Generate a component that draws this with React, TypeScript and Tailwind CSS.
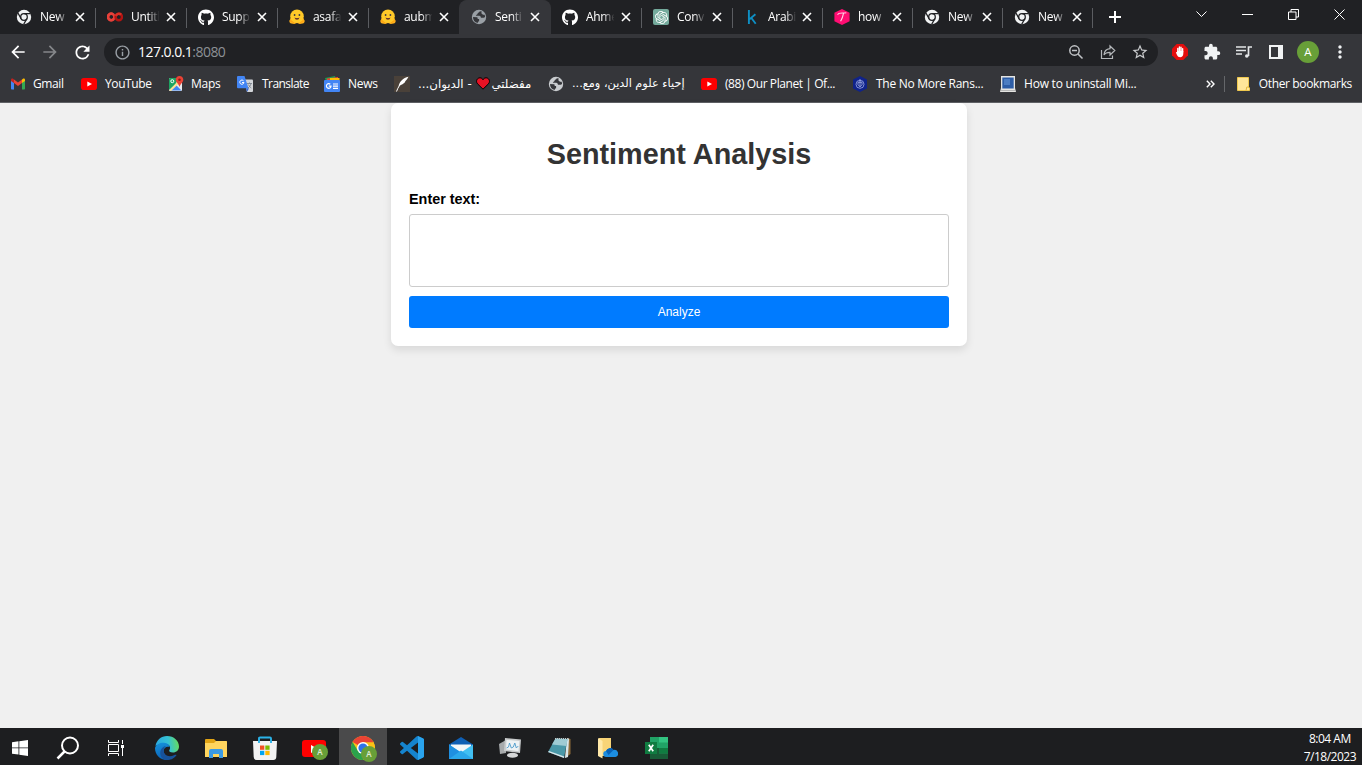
import React from "react";
import { FaGithub } from "react-icons/fa";
import { SiOpenai } from "react-icons/si";
import { MdArrowBack, MdArrowForward, MdRefresh, MdInfoOutline, MdStarBorder, MdExtension, MdMoreVert } from "react-icons/md";

const ui = "font-['Open_Sans','Noto_Sans',sans-serif]";

function Colab() {
  return (
    <svg width="16" height="16" viewBox="0 0 16 16" fill="none" strokeWidth="2.5">
      <circle cx="4.2" cy="8" r="3.2" stroke="#e8413a" />
      <circle cx="11.8" cy="8" r="3.2" stroke="#b31412" />
      <path d="M6 5.2A3.2 3.2 0 1 0 6.5 10.2" stroke="#e8413a" />
      <path d="M8.8 7a3.2 3.2 0 0 1 5.3-1.3" stroke="#d93025" />
    </svg>
  );
}

function ChromeMono() {
  return (
    <svg width="16" height="16" viewBox="0 0 16 16" fill="none">
      <circle cx="8" cy="8" r="7.200" fill="#f1f3f4" />
      <circle cx="8" cy="8" r="3.300" stroke="#202124" strokeWidth="1.300" />
      <path d="M8 4.700h6.500M5.100 9.600L1.900 4M10.900 9.600L7.700 15.200" stroke="#202124" strokeWidth="1.300" />
    </svg>
  );
}

function Globe({ disc, land }: { disc: string; land: string }) {
  return (
    <svg width="16" height="16" viewBox="0 0 16 16">
      <circle cx="8" cy="8" r="7.200" fill={disc} />
      <path d="M8.800 2.200c-.2 1.500-2 1.200-2.300 2.500-.2 1.200-1.800.8-1.600 2.100h3.300c1.300 0 1.700 1 1.700 2h2.300c.8 0 1.100-.6 1.900-.6a6 6 0 0 0-.5-2.500h-1.400c-1 0-1-1.400-2-1.400V3.600c.7 0 .8-.6.5-1.100zM2 8l4 .3c.8.200.8 1 .6 1.700h1.500v2.200c-1.300.2-1.300 1-1.300 1.700A6 6 0 0 1 2 8z" fill={land} />
    </svg>
  );
}

function Hugging() {
  return (
    <svg width="16" height="16" viewBox="0 0 16 16">
      <path d="M2 8.500L.4 11.800c-.3 1.500.6 2.500 2 2.700l2.800.4 2.800-1 2.800 1 2.800-.4c1.400-.2 2.300-1.200 2-2.700L14 8.500z" fill="#ffb21e" />
      <circle cx="8" cy="7.300" r="6.800" fill="#ffc928" />
      <circle cx="5.600" cy="6" r=".9" fill="#3a3b45" />
      <circle cx="10.400" cy="6" r=".9" fill="#3a3b45" />
      <path d="M5.500 8.400q2.500 1.100 5 0-.4 2.400-2.500 2.400T5.500 8.400z" fill="#6b3a2b" />
      <path d="M.8 11.600l2.600 1 1.800 1.800M15.200 11.600l-2.600 1-1.800 1.800" stroke="#ff9d0b" strokeWidth=".8" fill="none" />
    </svg>
  );
}

function OpenAi() {
  return (
    <span className="flex size-4 items-center justify-center rounded-xs bg-[#74aa9c]">
      <SiOpenai size={13} color="#fff" />
    </span>
  );
}

function Kaggle() {
  return (
    <svg width="16" height="16" viewBox="0 0 16 16" fill="none" stroke="#0e8fc4" strokeWidth="1.900">
      <path d="M4.900 1v14M11.400 5.200L5.400 10.400M7.400 9l4.300 5.700" />
    </svg>
  );
}

function PinkHex() {
  return (
    <svg width="16" height="16" viewBox="0 0 16 16">
      <path d="M8 0l7.600 3.800v8.400L8 16 .4 12.200V3.800z" fill="#ff0d72" />
      <path d="M3.600 5.700c1-2.500 4.400-1.300 8.700-1.900M9.500 4.300C9 7 8.200 9.500 6.600 12.300" stroke="#ffd5e7" strokeWidth="1.100" fill="none" />
    </svg>
  );
}

const chrome = <ChromeMono />;
const github = <FaGithub size={17} color="#fff" />;

const tabs = [
  { t: "New", i: chrome },
  { t: "Untitl", i: <Colab /> },
  { t: "Supp", i: github },
  { t: "asafa", i: <Hugging /> },
  { t: "aubm", i: <Hugging /> },
  { t: "Senti", i: <Globe disc="#9aa0a6" land="#35363a" />, active: true },
  { t: "Ahme", i: github },
  { t: "Conv", i: <OpenAi /> },
  { t: "Arabi", i: <Kaggle />, narrow: true },
  { t: "how", i: <PinkHex />, narrow: true },
  { t: "New", i: chrome, narrow: true },
  { t: "New", i: chrome, narrow: true },
];

function TabStrip() {
  return (
    <div className="flex h-[34px] bg-[#202124] pl-[5px] text-white">
      {tabs.map((tab, n) => (
        <div
          key={n}
          className={`relative flex h-full shrink-0 items-center pl-[11px] ${tab.narrow ? "w-[90px]" : "w-[91px]"} ${tab.active ? "rounded-t-lg bg-[#35363a] shadow-[-1px_0_0_#35363a]" : ""}`}
        >
          <span className="flex w-4 shrink-0 items-center justify-center">{tab.i}</span>
          <span className="ml-2 w-[31px] shrink-0 text-[12px] leading-4 tracking-[-0.3px] whitespace-nowrap [mask-image:linear-gradient(to_right,#000_55%,transparent_92%)]">
            {tab.t}
          </span>
          <svg className="mr-[11px] ml-auto shrink-0" width="10" height="10" viewBox="0 0 10 10" stroke="#fff" strokeWidth="1.600">
            <path d="M1 1l8 8M9 1l-8 8" />
          </svg>
          {!tab.active && n !== 4 && <span className="absolute top-2 right-0 h-5 w-px bg-[#5b5d61]" />}
        </div>
      ))}
      <svg className="mt-[9px] ml-[14px]" width="16" height="16" viewBox="0 0 16 16" stroke="#fff" strokeWidth="2">
        <path d="M8 2v12M2 8h12" />
      </svg>
      <div className="ml-auto flex h-7">
        {["M.5 2.500l5 5 5-5", "M0 5.500h11", "M.5 3h7.500v7.500h-7.500zM3 3V.5h7.500V8H8", "M.5.5l10 10M10.500.5l-10 10"].map((d) => (
          <span key={d} className="flex w-[46px] items-center justify-center">
            <svg width="11" height="11" viewBox="0 0 11 11" fill="none" stroke="#fff">
              <path d={d} />
            </svg>
          </span>
        ))}
      </div>
    </div>
  );
}

function Cell({ children }: { children: React.ReactNode }) {
  return <span className="flex w-8 shrink-0 items-center justify-center">{children}</span>;
}

function Toolbar() {
  return (
    <div className="flex h-9 items-center bg-[#35363a] pl-[2px]">
      <Cell><MdArrowBack size={20} color="#fff" /></Cell>
      <Cell><MdArrowForward size={20} color="#85878a" /></Cell>
      <Cell><MdRefresh size={21} color="#fff" /></Cell>
      <div className="ml-[6px] flex h-7 w-[1054px] items-center rounded-full bg-[#202124] pr-[2px] pl-[10px]">
        <MdInfoOutline size={17} color="#9aa0a6" />
        <span className="ml-[7px] text-[14px] leading-5 tracking-[-0.53px] text-white">
          127.0.0.1<span className="text-[#8d9196]">:8080</span>
        </span>
        <div className="ml-auto flex">
          <Cell>
            <svg width="16" height="16" viewBox="0 0 16 16" fill="none" stroke="#c0c3c6" strokeWidth="1.500">
              <circle cx="6.500" cy="6.500" r="4.700" />
              <path d="M10 10l4.500 4.500M4 6.500h5" />
            </svg>
          </Cell>
          <Cell>
            <svg width="16" height="16" viewBox="0 0 16 16" fill="none" stroke="#b4b7ba" strokeWidth="1.200">
              <path d="M1.500 6v8.500h11v-3M10 2l4.800 4.500L10 11V8.300c-3 0-4.800.7-6 2.700 .2-3.800 2.300-6 6-6.400z" />
            </svg>
          </Cell>
          <Cell><MdStarBorder size={18} color="#c8cacc" /></Cell>
        </div>
      </div>
      <div className="ml-[6px] flex items-center">
        <Cell>
          <svg width="16" height="16" viewBox="0 0 16 16">
            <path d="M4.700 0h6.600L16 4.700v6.600L11.300 16H4.700L0 11.300V4.700z" fill="#e40d0d" />
            <path d="M5.800 8V4.500M7.400 7V3M9 7V3.200M10.600 8V4.600" stroke="#fff" strokeWidth="1.400" strokeLinecap="round" />
            <path d="M5.100 7h6.200v2.800c0 2-1.300 3.400-3.100 3.400-1.600 0-2.500-.7-3.200-2.200L3.900 8.600c.2-.7.900-.7 1.200-.2z" fill="#fff" />
          </svg>
        </Cell>
        <Cell><MdExtension size={18} color="#f1f3f4" /></Cell>
        <Cell>
          <svg width="16" height="16" viewBox="0 0 16 16" fill="none" stroke="#e4e6e8" strokeWidth="1.700">
            <path d="M0 3h10M0 6.500h10M0 10h6M12.500 12V3H16" />
            <circle cx="10.800" cy="12" r="1.800" fill="#e4e6e8" stroke="none" />
          </svg>
        </Cell>
        <Cell>
          <svg width="14" height="14" viewBox="0 0 14 14">
            <path d="M1 1h12v12H1z" fill="none" stroke="#f1f3f4" strokeWidth="2" />
            <path d="M9 1h4v12H9z" fill="#f1f3f4" />
          </svg>
        </Cell>
        <Cell><span className="flex size-[22px] items-center justify-center rounded-full bg-[#689f38] text-[11.500px] leading-none font-medium text-white">A</span></Cell>
        <Cell><MdMoreVert size={20} color="#f1f3f4" /></Cell>
      </div>
    </div>
  );
}

function YouTube() {
  return (
    <svg width="16" height="12" viewBox="0 0 16 12">
      <rect width="16" height="12" rx="2.800" fill="#f00" />
      <path d="M6.300 3.500L11 6 6.300 8.500z" fill="#fff" />
    </svg>
  );
}

function Gmail() {
  return (
    <svg width="14" height="12" viewBox="0 0 14 11">
      <path d="M0 1.500v8.700c0 .5.300.8.800.8H3V4z" fill="#4285f4" />
      <path d="M14 1.500v8.700c0 .5-.3.800-.8.800H11V4z" fill="#34a853" />
      <path d="M3 4.600V1l4 3 4-3v3.600l-4 3z" fill="#ea4335" />
      <path d="M0 1.500C0 .2 1.300-.3 2.300.4L3 1v3.600L0 2.500z" fill="#c5221f" />
      <path d="M14 1.500c0-1.300-1.300-1.800-2.300-1.100L11 1v3.600l3-2.100z" fill="#fbbc04" />
    </svg>
  );
}

function Maps() {
  return (
    <svg width="16" height="16" viewBox="0 0 16 16">
      <rect x="1" y="2" width="13" height="13" rx="1" fill="#e8eaed" />
      <path d="M1 3q0-1 1-1h8L8 8l-7 6z" fill="#1ea362" />
      <path d="M1.500 14.500L7.500 8.500l6 6z" fill="#4285f4" />
      <path d="M1 14.500L9 6l2 1.500-8 7.500z" fill="#fde293" />
      <circle cx="4.300" cy="5.200" r="1.500" fill="none" stroke="#fff" />
      <path d="M11.500 0c2.300 0 3.800 1.700 3.800 3.700 0 2.500-2.700 3.600-3.800 7.300-1-3.700-3.700-4.800-3.700-7.300C7.800 1.700 9.300 0 11.500 0z" fill="#ea4335" />
      <circle cx="11.500" cy="3.700" r="1.300" fill="#8e1b14" />
    </svg>
  );
}

function Translate() {
  return (
    <svg width="16" height="16" viewBox="0 0 16 16">
      <path d="M7 3.500h8q1 0 1 1V15q0 1-1 1h-5z" fill="#d3d6da" />
      <path d="M9 12.300h3L10 16z" fill="#3367d6" />
      <path d="M1 0h6.500l4 12.300H1q-1 0-1-1V1q0-1 1-1z" fill="#4285f4" />
      <path d="M6.600 4.900A2.100 2.100 0 1 0 7 6.500H5" stroke="#fff" fill="none" />
      <path d="M10 7.500h5M12.500 6.500v1M14 7.500c-.5 2-1.500 3.300-3 4.500M11.300 8.500c.7 1.500 1.700 2.500 3 3.500" stroke="#727b86" fill="none" strokeWidth=".8" />
    </svg>
  );
}

function News() {
  return (
    <svg width="16" height="16" viewBox="0 0 16 16">
      <path d="M1 2l10-2 1.500 5H2z" fill="#1e9e50" />
      <path d="M3 2.500L14 1v4H3z" fill="#ea4335" />
      <path d="M6 2h9.500v4H6z" fill="#fbbc04" />
      <rect y="4" width="16" height="12" rx="1" fill="#4285f4" />
      <path d="M6.300 8.300A2.300 2.300 0 1 0 7 10.200H4.800M9 8h5M9 10.200h5M9 12.400h5" stroke="#fff" fill="none" strokeWidth="1.200" />
    </svg>
  );
}

function Feather() {
  return (
    <svg width="16" height="16" viewBox="0 0 16 16">
      <path d="M0 0h16v16H0z" fill="#4a4139" />
      <path d="M14.500.8C9 2 5.500 5.500 4.500 10.500 9 8 11 7 11.300 5.300 12.500 4 13.700 2.500 14.500.8z" fill="#fff" />
      <path d="M2.500 15.500C4 11 7 7 10 4.500" stroke="#fff" fill="none" />
    </svg>
  );
}

function Heart() {
  return (
    <svg className="mx-[1px] inline-block align-[-2px]" width="14" height="13" viewBox="0 0 14 13">
      <path d="M7 12.200L1.500 6.800C-.8 4 1.400.7 4 .8 5.600.9 6.500 1.700 7 2.700 7.500 1.700 8.400.9 10 .8c2.600-.1 4.800 3.200 2.500 6z" fill="#e81224" stroke="#000" />
    </svg>
  );
}

function Shield() {
  return (
    <svg width="16" height="16" viewBox="0 0 16 16">
      <path d="M8 0l7 3.500v9L8 16l-7-3.500v-9z" fill="#10238a" />
      <circle cx="8" cy="8.300" r="4" fill="none" stroke="#8d9bdc" strokeWidth=".9" />
      <path d="M6 6.300h4v2.500l-2 2-2-2zM8 3v8" fill="none" stroke="#aab4e6" strokeWidth=".8" />
    </svg>
  );
}

function Laptop() {
  return (
    <svg width="16" height="16" viewBox="0 0 16 16">
      <path d="M1 0h14v12l1 4H0l1-4z" fill="#e4e4e1" />
      <path d="M2.300 1.500h11.400V12.500H2.300z" fill="#2d5da6" />
      <path d="M4 3h6v6H4z" fill="#4c7dc2" />
      <path d="M1 14.500h14" stroke="#b7b8b8" />
    </svg>
  );
}

const marks = [
  { t: "Gmail", i: <Gmail />, w: "w-[71px]", s: "tracking-[-0.4px] -ml-px" },
  { t: "YouTube", i: <YouTube />, w: "w-[87px]", s: "tracking-[-0.4px]" },
  { t: "Maps", i: <Maps />, w: "w-[69px]", s: "tracking-[-0.25px] -ml-px" },
  { t: "Translate", i: <Translate />, w: "w-[87px]", s: "tracking-[-0.55px] [word-spacing:0] pl-px tracking-[-0.4px]" },
  { t: "News", i: <News />, w: "w-[70px]", s: "tracking-[-0.25px]" },
  { t: <>مفضلتي<Heart /> - الديوان...</>, i: <Feather />, w: "w-[154px]", s: "text-[11.800px]", rtl: true },
  { t: "إحياء علوم الدين، ومع...", i: <Globe disc="#c8cbce" land="#35363a" />, w: "w-[153px]", s: "text-[11.300px]", rtl: true },
  { t: "(88) Our Planet | Of...", i: <YouTube />, w: "w-[151px]", s: "tracking-[-0.42px]" },
  { t: "The No More Rans...", i: <Shield />, w: "w-[148px]", s: "tracking-[-0.28px]" },
  { t: "How to uninstall Mi...", i: <Laptop />, w: "w-[160px]", s: "tracking-[-0.22px]" },
];

function Bookmarks() {
  return (
    <div className="flex h-[33px] border-b border-[#5f6165] bg-[#35363a] pb-1 pl-[11px] text-[12px] leading-4 text-white">
      {marks.map((m, n) => (
        <div key={n} className={`flex shrink-0 items-center gap-2 whitespace-nowrap ${m.w} ${n === 0 ? "-ml-px" : ""}`}>
          <span className="flex w-4 shrink-0 justify-center">{m.i}</span>
          <span dir={m.rtl ? "rtl" : "ltr"} className={m.rtl ? `font-['DejaVu_Sans',sans-serif] ${m.s}` : m.s}>{m.t}</span>
        </div>
      ))}
      <div className="ml-auto flex items-center pr-[10px]">
        <svg width="9" height="8" viewBox="0 0 9 8" fill="none" stroke="#fff" strokeWidth="1.400">
          <path d="M.8.8L4 4 .8 7.200M4.800.8L8 4 4.800 7.200" />
        </svg>
        <span className="ml-[9px] h-4 w-px bg-[#65676a]" />
        <svg className="ml-3" width="13" height="14" viewBox="0 0 13 14">
          <path d="M.5.5h11v9.500l1 1v2.500H.5z" fill="#ffe69a" stroke="#f0c94f" />
          <path d="M9 13.500l.8-3.500h2.200" stroke="#e4b83c" fill="none" />
        </svg>
        <span className="ml-[9px] tracking-[-0.35px] whitespace-nowrap">Other bookmarks</span>
      </div>
    </div>
  );
}

function Page() {
  return (
    <main className="flex flex-1 items-start bg-[#f0f0f0] pl-[391px] font-['Liberation_Sans',Arial,sans-serif]">
      <form className="flex h-[243px] w-[576px] flex-col rounded-[7px] bg-white px-[18px] shadow-[0_4px_9px_rgba(0,0,0,0.1)]">
        <h1 className="mt-[35px] text-center text-[28.800px] leading-[33px] font-bold text-[#333]">Sentiment Analysis</h1>
        <label htmlFor="text" className="mt-5 text-[14.400px] leading-4 font-bold text-black">Enter text:</label>
        <textarea id="text" className="mt-[7px] h-[73px] shrink-0 resize-none rounded-[3px] border border-[#ccc] bg-white" />
        <button type="button" className="mt-[9px] h-8 shrink-0 rounded-[3px] bg-[#007bff] text-[12px] text-white">Analyze</button>
      </form>
    </main>
  );
}

function Badge() {
  return <span className="absolute right-[-2px] bottom-[-2px] flex size-4 items-center justify-center rounded-full bg-[#689f38] text-[8px] leading-none font-semibold text-white/80">A</span>;
}

function Edge() {
  return (
    <svg width="24" height="24" viewBox="0 0 24 24">
      <defs>
        <linearGradient id="ea" x1="0" y1=".4" x2="1" y2=".3"><stop stopColor="#2aa9e0" /><stop offset=".55" stopColor="#35c1d4" /><stop offset="1" stopColor="#68dc58" /></linearGradient>
        <linearGradient id="eb" x1="0" y1="0" x2=".3" y2="1"><stop stopColor="#1593dc" /><stop offset="1" stopColor="#0b63b8" /></linearGradient>
      </defs>
      <path d="M.5 10C1.500 4 6.200 0 12 0c7 0 12 5 12 10.500 0 3.700-2.700 6-6 6-3.200 0-4.300-1.200-3.700-2.200 2.300-3.300-.5-6.600-4.300-6.600C5.500 7.500 2 9 .5 10z" fill="url(#ea)" />
      <path d="M0 12C1 8.500 5 6.500 9 6.800c3 .2 5.500 2 5.600 4.400-2.500-1.400-6 .5-6 3.700 0 4.200 4.700 7.300 9 6.200-2 1.900-4 2.900-6 2.900C5 24 0 18.800 0 12z" fill="url(#eb)" />
      <path d="M8.700 14c-.6 5 5.200 7.800 10.200 5.200 2-.8 3-.2 2.300.5C18.500 23 15 24 12 24 7.500 24 5 20 5.300 16.500c.2-3.200 2.500-5.800 5.700-6.500-1.400 1-2.100 2.300-2.300 4z" fill="#17529b" />
    </svg>
  );
}

function Explorer() {
  return (
    <svg width="22" height="19" viewBox="0 0 22 19">
      <path d="M0 1q0-1 1-1h8l2 2h10q1 0 1 1v4H0z" fill="#e2a414" />
      <path d="M0 4h9l2-2h10q1 0 1 1v15H0z" fill="#ffd55e" />
      <path d="M4 19v-7q0-2 2-2h10q2 0 2 2v7h-4v-4H8v4z" fill="#3b9ae4" />
    </svg>
  );
}

function Store() {
  return (
    <svg width="24" height="24" viewBox="0 0 24 24">
      <path d="M0 5h24l-.7 16q-.1 3-3 3H3.700q-2.900 0-3-3z" fill="#f2f2f2" />
      <path d="M6 7V2.500q0-1 1-1h10q1 0 1 1V7" fill="none" stroke="#2bb3e8" strokeWidth="1.900" />
      <path d="M7 9.500h4.300v4.300H7z" fill="#f25022" /><path d="M12.300 9.500h4.300v4.300h-4.300z" fill="#7fba00" />
      <path d="M7 14.800h4.300v4.300H7z" fill="#00a4ef" /><path d="M12.300 14.800h4.300v4.300h-4.300z" fill="#ffb900" />
    </svg>
  );
}

function ChromeColor() {
  return (
    <svg width="24" height="24" viewBox="0 0 24 24">
      <circle cx="12" cy="12" r="12" fill="#fbc116" />
      <path d="M12 12L1.600 6A12 12 0 0 1 22.400 6z" fill="#ea4335" />
      <path d="M1.600 6A12 12 0 0 0 12 24l5.200-9L12 12 7 15z" fill="#2ba24c" />
      <path d="M12 6h10.400L17 12z" fill="#ea4335" />
      <path d="M12 6.300h10.500A12 12 0 0 1 12 24l5-9z" fill="#fbc116" />
      <circle cx="12" cy="12" r="6" fill="#fff" /><circle cx="12" cy="12" r="4.600" fill="#2f73e8" />
    </svg>
  );
}

function Code() {
  return (
    <svg width="24" height="24" viewBox="0 0 24 24">
      <path d="M23.150 2.587L18.210.21a1.494 1.494 0 0 0-1.705.29l-9.460 8.630-4.120-3.128a.999.999 0 0 0-1.276.057L.327 7.261A1 1 0 0 0 .326 8.740L3.899 12 .326 15.260a1 1 0 0 0 .001 1.479L1.650 17.940a.999.999 0 0 0 1.276.057l4.120-3.128 9.460 8.630a1.492 1.492 0 0 0 1.704.290l4.942-2.377A1.500 1.500 0 0 0 24 20.060V3.939a1.500 1.500 0 0 0-.850-1.352zm-5.146 14.861L10.826 12l7.178-5.448v10.896z" fill="#1584ce" />
      <path d="M18 .1l5.150 2.487q.85.400.850 1.352v16.121q0 .950-.850 1.352L18 23.900z" fill="#2aa4ee" />
    </svg>
  );
}

function Mail() {
  return (
    <svg width="24" height="22" viewBox="0 0 24 22">
      <path d="M0 7.500L12 0l12 7.500V14H0z" fill="#0f5fb4" />
      <path d="M2 7.500h20v8H2z" fill="#f3f6f8" />
      <path d="M0 7.500l12 8L24 7.500V22H0z" fill="#42c0f2" />
      <path d="M0 7.500l12 8L2.500 22H0z" fill="#1f8fe0" />
      <path d="M12 13.500L24 22H0z" fill="#2ba7ea" />
    </svg>
  );
}

function Monitor() {
  return (
    <svg width="23" height="20" viewBox="0 0 23 20">
      <path d="M0 6l7-4v13l-6 1z" fill="#a7aaac" />
      <path d="M6 0l16 1.500-1 13.500L5 13z" fill="#c9cccd" />
      <path d="M7.500 2l13 1-1 10.300L7 11.500z" fill="#eef2f4" />
      <path d="M7.500 10l2-1 1-4 1.800 5 2-1 1.500-4 1.500 5 2-2" stroke="#4d9bcb" fill="none" strokeWidth=".9" />
      <ellipse cx="13.500" cy="17.300" rx="5.500" ry="2.500" fill="#d5d7d8" />
    </svg>
  );
}

function Notepad() {
  return (
    <svg width="23" height="22" viewBox="0 0 23 22">
      <path d="M19 1l3.500 1v15L17 21z" fill="#8e6b38" />
      <path d="M19 1.500h2L20 20l-3 1z" fill="#d9e6ea" />
      <path d="M7.500 1.500L19.500 2l-3.500 19L0 15z" fill="#4a98a8" />
      <path d="M7.500 1.500L19.500 2l-1 7L4 7.500z" fill="#9fcbd3" />
      <path d="M0 15l16 6 .3-1.500L1 14z" fill="#dce8ec" />
      <path d="M7 1.500h13" stroke="#c8c8c8" strokeWidth="1.200" strokeDasharray="1 1" />
    </svg>
  );
}

function CloudFolder() {
  return (
    <svg width="20" height="21" viewBox="0 0 20 21">
      <path d="M1 0h12v18H1z" fill="#f8d477" />
      <path d="M0 0l4.500 3v17.500L0 18z" fill="#ffe9a9" />
      <path d="M8.500 19a3 3 0 0 1-.5-6 4.200 4.200 0 0 1 7.500-1 3.600 3.600 0 0 1 2 7z" fill="#1c8de0" />
      <path d="M8 13a4.200 4.200 0 0 1 7.500-1l-5 5z" fill="#0762b8" />
    </svg>
  );
}

function Excel() {
  return (
    <svg width="24" height="22" viewBox="0 0 24 22">
      <path d="M5 0h18v22H5z" fill="#21a366" />
      <path d="M14 0h9v5.500h-9z" fill="#33c481" />
      <path d="M14 11h9v5.500h-9z" fill="#107c41" /><path d="M5 11h9v11H5z" fill="#185c37" />
      <path d="M14 16.500h9V22h-9z" fill="#185c37" />
      <path d="M0 5h12v12H0z" fill="#107c41" />
      <path d="M3.800 7.800l4.400 6.400M8.200 7.800l-4.400 6.400" stroke="#fff" strokeWidth="1.700" />
    </svg>
  );
}

const apps = [
  <Edge />,
  <Explorer />,
  <Store />,
  <span className="relative flex h-5 w-6 items-center"><svg width="24" height="17" viewBox="0 0 24 17"><rect width="24" height="17" rx="3" fill="#f00" /><path d="M9 5l7 4-7 4z" fill="#fff" /></svg><Badge /></span>,
  <span className="relative"><ChromeColor /><Badge /></span>,
  <Code />,
  <Mail />,
  <Monitor />,
  <Notepad />,
  <CloudFolder />,
  <Excel />,
];

function Taskbar() {
  return (
    <footer className="flex h-[37px] shrink-0 overflow-hidden bg-[#1d1e20]">
      <div className="flex h-10 w-10 items-center justify-center">
        <svg width="16" height="16" viewBox="0 0 16 16" fill="#fff"><path d="M0 2.200l6.500-.9v6.200H0zM7.300 1.200L16 0v7.500H7.300zM0 8.300h6.500v6.300L0 13.700zM7.300 8.300H16V16l-8.700-1.200z" /></svg>
      </div>
      <div className="ml-1 flex h-10 w-12 items-center justify-center">
        <svg width="24" height="24" viewBox="0 0 24 24" fill="none" stroke="#fff" strokeWidth="2"><circle cx="14" cy="9.500" r="8" /><path d="M8.500 15.500L1.500 22.500" strokeWidth="2.500" /></svg>
      </div>
      <div className="flex h-10 w-12 items-center justify-center">
        <svg width="16" height="16" viewBox="0 0 16 16" fill="none" stroke="#fff"><path d="M.5 0v2.500h10V0M.5 16v-2.500h10V16M.5 4.500h10v7H.5zM14.500 0v4M14.500 8v8" /><path d="M13 5h3v3h-3z" fill="#fff" stroke="none" /></svg>
      </div>
      <div className="ml-[3px] flex gap-px">
        {apps.map((a, n) => (
          <div key={n} className={`flex h-10 w-12 items-center justify-center ${n === 4 ? "bg-[#4a4a4b]" : ""}`}>{a}</div>
        ))}
      </div>
      <div className="mr-[6px] ml-auto flex flex-col pt-[2px] text-center text-[12px] leading-[18px] tracking-[-0.5px] text-white">
        <span>8:04 AM</span>
        <span>7/18/2023</span>
      </div>
    </footer>
  );
}

export default function App() {
  return (
    <div className={`flex h-[765px] w-[1362px] flex-col overflow-hidden ${ui}`}>
      <TabStrip />
      <Toolbar />
      <Bookmarks />
      <Page />
      <Taskbar />
    </div>
  );
}
